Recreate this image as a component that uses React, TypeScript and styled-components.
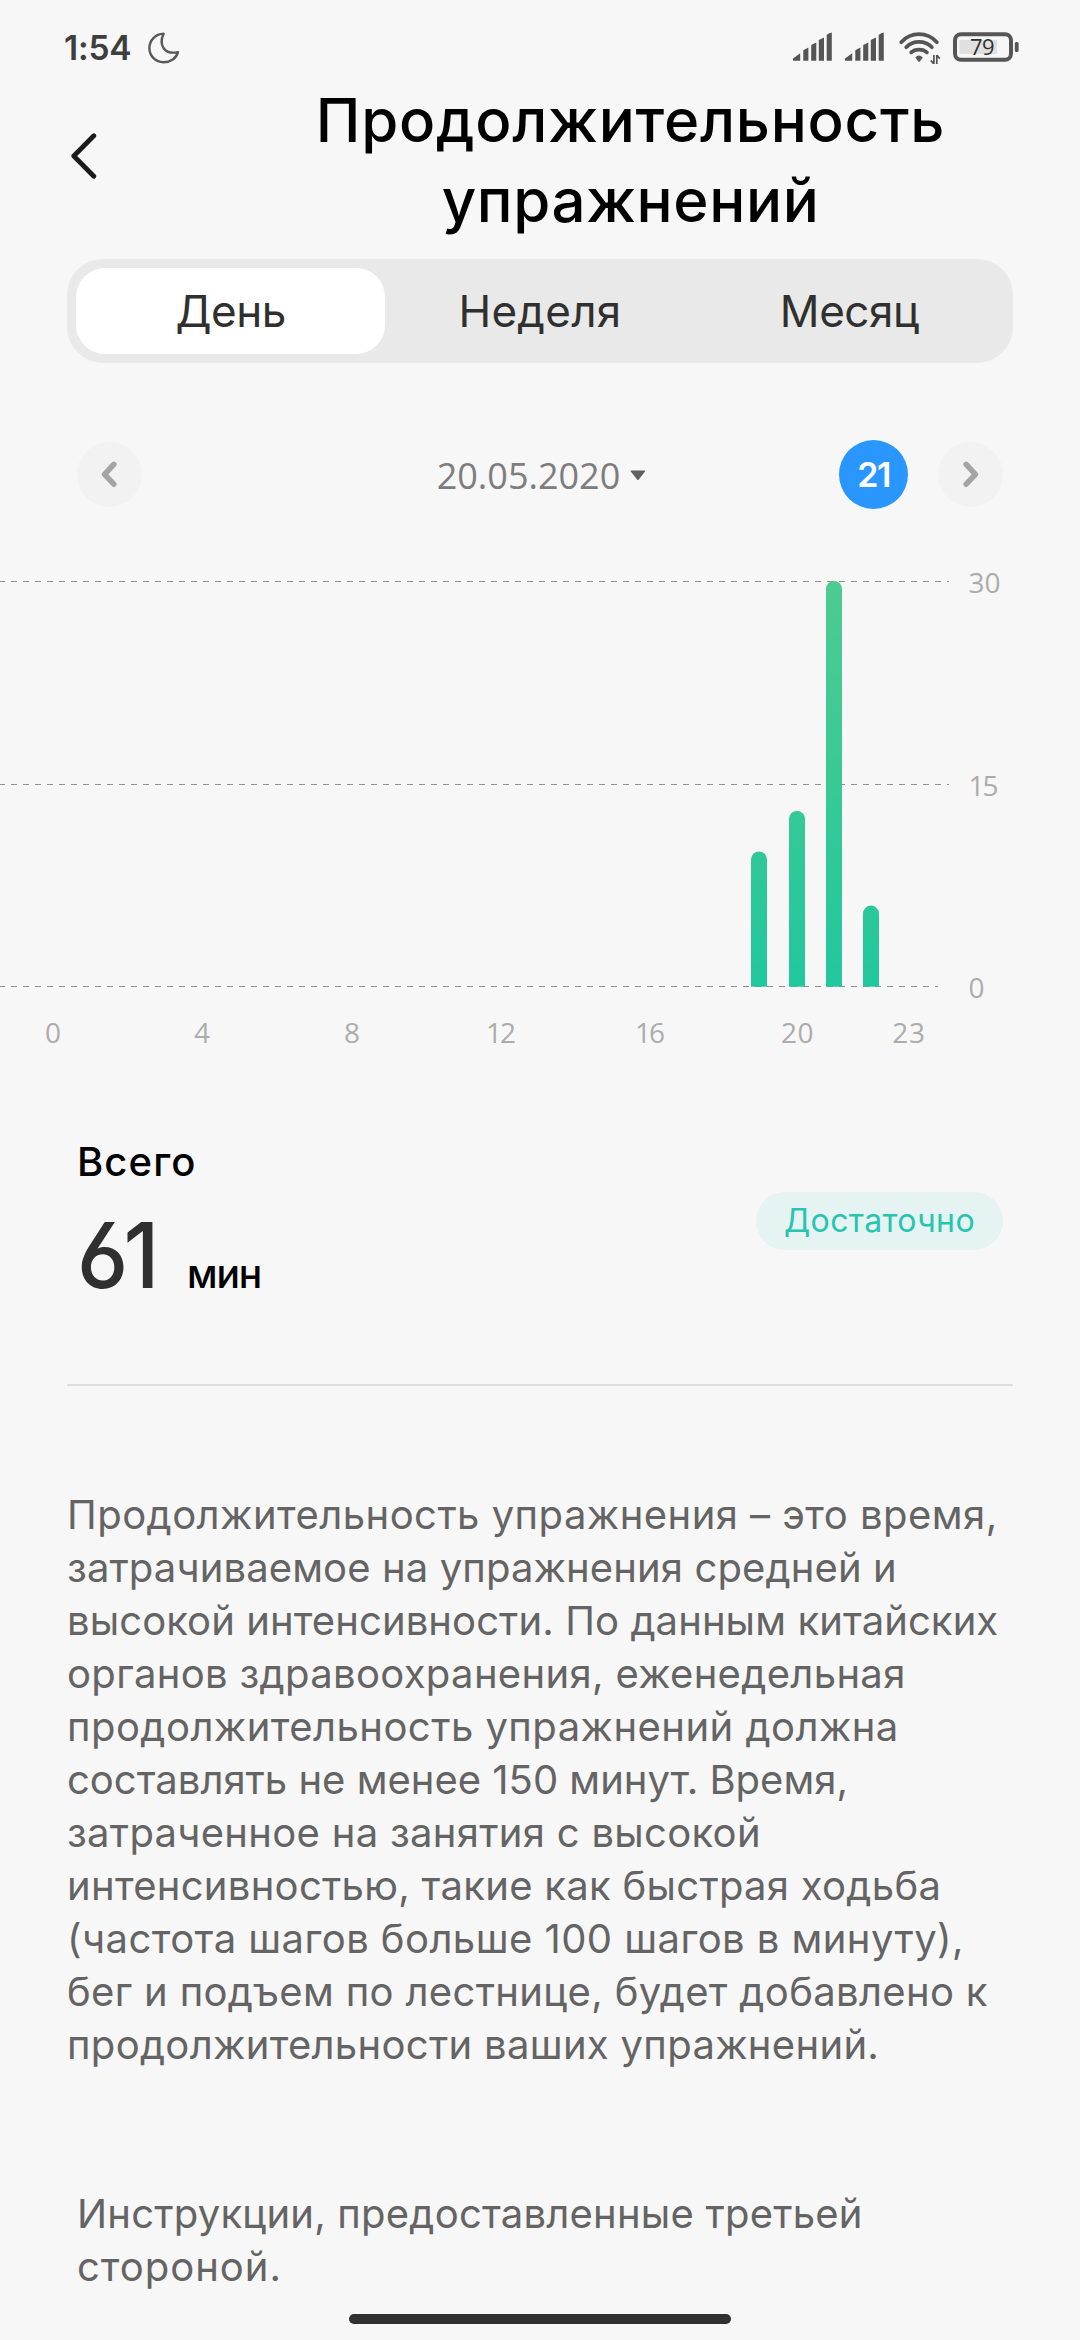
import React from 'react';
import styled, { createGlobalStyle } from 'styled-components';

const GlobalStyle = createGlobalStyle`
  * { box-sizing: border-box; }
  html, body { margin: 0; padding: 0; background: #f7f7f7; }
  body { font-family: Inter, "Liberation Sans", sans-serif; }
  button { font: inherit; border: 0; padding: 0; background: none; color: inherit; }
  svg { display: block; flex: none; }
`;

const Screen = styled.main`
  width: 1080px;
  height: 2340px;
  overflow: hidden;
  display: flex;
  flex-direction: column;
  background: #f7f7f7;
`;

const StatusBar = styled.div`
  height: 80px;
  padding: 16px 61px 0 64px;
  display: flex;
  align-items: center;
  justify-content: space-between;
`;

const StatusGroup = styled.div<{ $gap: number }>`
  display: flex;
  align-items: center;
  gap: ${(p) => p.$gap}px;
`;

const Clock = styled.span`
  font-size: 33.5px;
  line-height: 40px;
  font-weight: 600;
  letter-spacing: -0.2px;
  color: #3e3e3e;
`;

const Header = styled.header`
  height: 160px;
  padding-left: 71px;
  display: flex;
  align-items: center;
`;

const BackButton = styled.button`
  width: 26px;
  height: 46px;
  margin: 0 84px 9px 0;
`;

const Title = styled.h1`
  flex: 1;
  margin: 0;
  text-align: center;
  font-size: 60px;
  line-height: 80px;
  font-weight: 500;
  color: #000;
`;

const Tracked = styled.span<{ $track: number }>`
  display: block;
  white-space: nowrap;
  letter-spacing: ${(p) => p.$track}px;
`;

const Tabs = styled.nav`
  height: 104px;
  margin: 19px 67px 0;
  padding: 9px;
  display: grid;
  grid-template-columns: repeat(3, 1fr);
  border-radius: 36px;
  background: #e9e9e9;
`;

const Tab = styled.button<{ $active?: boolean; $track: number }>`
  border-radius: 29px;
  background: ${(p) => (p.$active ? '#fff' : 'transparent')};
  color: #303030;
  font-size: 44px;
  line-height: 86px;
  letter-spacing: ${(p) => p.$track}px;
`;

const DateNav = styled.div`
  height: 69px;
  margin: 77px 77px 0;
  display: grid;
  grid-template-columns: 1fr auto 1fr;
  align-items: center;
`;

const RoundButton = styled.button`
  width: 65px;
  height: 65px;
  border-radius: 50%;
  display: flex;
  align-items: center;
  justify-content: center;
  background: #f2f2f2;
`;

const DatePicker = styled.button`
  padding: 2px 0 0 3px;
  display: flex;
  align-items: center;
  gap: 10px;
  font-family: "Open Sans", sans-serif;
  font-size: 36px;
  line-height: 48px;
  color: #7d7d7d;
`;

const NavEnd = styled.div`
  display: flex;
  align-items: center;
  justify-content: flex-end;
  gap: 30px;
`;

const TodayBadge = styled.button`
  width: 69px;
  height: 69px;
  border-radius: 50%;
  background: #2a96ff;
  color: #fff;
  font-size: 34px;
  line-height: 69px;
  font-weight: 600;
  letter-spacing: -1.6px;
`;

const ChartBox = styled.section`
  height: 500px;
  margin-top: 51px;
`;

const AxisText = styled.text`
  font-family: "Open Sans", sans-serif;
  font-size: 28px;
  fill: #acacac;
`;

const Summary = styled.section`
  height: 172px;
  margin: 78px 77px 0;
  display: flex;
  align-items: center;
  justify-content: space-between;
`;

const SummaryLabel = styled.div`
  font-size: 40px;
  line-height: 48px;
  font-weight: 500;
  letter-spacing: 1.1px;
  color: #000;
`;

const SummaryValue = styled.div`
  height: 110px;
  margin-top: 14px;
  display: flex;
  align-items: baseline;
`;

const Minutes = styled.span`
  width: 110px;
  font-size: 91px;
  line-height: 110px;
  font-weight: 500;
  font-feature-settings: "cv03", "ss01";
  letter-spacing: -5px;
  transform: scaleX(0.95);
  transform-origin: left;
  color: #303030;
`;

const Unit = styled.span`
  font-size: 39px;
  font-weight: 500;
  letter-spacing: -1.2px;
  color: #000;
`;

const Badge = styled.span`
  height: 58px;
  margin-bottom: 6px;
  padding: 0 28px;
  border-radius: 29px;
  background: #e5f3f2;
  color: #27c5af;
  font-size: 32px;
  line-height: 58px;
  letter-spacing: 0.4px;
`;

const Divider = styled.hr`
  width: 946px;
  height: 2px;
  margin: 74px 67px 0;
  border: 0;
  background: #dedede;
`;

const Paragraph = styled.p<{ $top: number; $left: number }>`
  margin: ${(p) => p.$top}px 0 0 ${(p) => p.$left}px;
  font-size: 40px;
  line-height: 53px;
  color: #646464;
`;

const HomeIndicator = styled.div`
  width: 382px;
  height: 10px;
  margin: 21px auto 0;
  border-radius: 5px;
  background: #303030;
`;

const MoonIcon = () => (
  <svg width="32" height="32" viewBox="0 0 32 32" fill="none" stroke="#585858" strokeWidth="2.4" strokeLinejoin="round">
    <path d="M15.6 1.6C7.4 2 1.4 8.2 1.4 16.1C1.4 24.2 7.6 30.2 15.6 30.2C22.6 30.2 28.4 26.2 30 20.1C16 23 10.5 13 15.6 1.6Z" />
  </svg>
);

const SignalIcon = () => (
  <svg width="40" height="32" viewBox="0 0 40 32" fill="#555">
    <path d="M0 28.8V26.6L7.2 21.3V28.8Z M10.3 28.8V18.2L15.4 15.6V28.8Z M18.2 28.8V13L23.3 10.6V28.8Z M25.8 28.8V8L31 5.4V28.8Z M33.7 28.8V3Q36 .6 38.8 .4V28.8Z" />
  </svg>
);

const WifiIcon = () => (
  <svg width="43" height="32" viewBox="0 0 43 32" fill="none" stroke="#555" strokeWidth="3.7" strokeLinecap="round">
    <path d="M3.2 10.2C13 -.5 29 -.5 38.9 10.2" />
    <path d="M8.2 15.2C15 8 27 8 33.9 15.2" />
    <path d="M13.2 20.4C17 16.6 25 16.6 28.9 20.4" />
    <path d="M17.3 25.4Q21 21.6 24.8 25.4L21.8 29.4Q21 30.2 20.3 29.4Z" fill="#555" stroke="none" />
    <path d="M35.9 23V32M32.8 28.4L35.4 31.4M38.8 32V23M41.8 26.6L39.2 23.6" strokeWidth="1.7" strokeLinecap="butt" />
  </svg>
);

const BatteryText = styled.text`
  font-family: "Open Sans", sans-serif;
  font-size: 22px;
  font-weight: 500;
  letter-spacing: -0.6px;
  fill: #303030;
`;

const BatteryIcon = () => (
  <svg width="66" height="32" viewBox="0 0 66 32">
    <rect x="6.5" y="8" width="37.5" height="14" fill="#e0e0e0" />
    <rect x="2" y="2.2" width="56" height="25.6" rx="6" fill="none" stroke="#565656" strokeWidth="4" />
    <rect x="61.8" y="10" width="3.8" height="10" rx="1.5" fill="#565656" />
    <BatteryText x="29" y="23" textAnchor="middle">79</BatteryText>
  </svg>
);

const Chevron = ({ right }: { right?: boolean }) => (
  <svg width="17" height="27" viewBox="0 0 17 27" fill="none" stroke="#a4a4a4" strokeWidth="5.6" strokeLinecap="round" strokeLinejoin="round">
    <path d={right ? 'M4.2 3.4L13.4 13.3L4.2 23.2' : 'M12.8 3.4L3.6 13.3L12.8 23.2'} />
  </svg>
);

const BASELINE = 426.8;
const UNIT = 13.53;
const bars = [
  { x: 751, value: 10 },
  { x: 789, value: 13 },
  { x: 826, value: 30 },
  { x: 863, value: 6 },
];
const gridLines = [
  { y: 21.5, end: 949, label: '30', track: 0 },
  { y: 224.5, end: 949, label: '15', track: -2 },
  { y: 426.5, end: 938, label: '0', track: 0 },
];
const hours = [
  { x: 53, label: '0', track: 0 },
  { x: 202, label: '4', track: 0 },
  { x: 352, label: '8', track: 0 },
  { x: 500, label: '12', track: -2 },
  { x: 649, label: '16', track: -2 },
  { x: 797.5, label: '20', track: 0.6 },
  { x: 909, label: '23', track: 0.8 },
];

const Chart = () => (
  <ChartBox>
    <svg width="1080" height="500" viewBox="0 0 1080 500">
      <defs>
        <linearGradient id="bar" gradientUnits="userSpaceOnUse" x1="0" y1="20" x2="0" y2="427">
          <stop offset="0" stopColor="#4ecb90" />
          <stop offset="0.5" stopColor="#38c996" />
          <stop offset="1" stopColor="#22c79d" />
        </linearGradient>
      </defs>
      {gridLines.map((g) => (
        <g key={g.label}>
          <path d={`M-1 ${g.y}H${g.end}`} stroke="#8e8e8e" strokeWidth="1" strokeDasharray="6 6" />
          <AxisText x="968.5" y={g.y + 11.3} letterSpacing={g.track}>{g.label}</AxisText>
        </g>
      ))}
      {bars.map((b) => {
        const top = BASELINE - b.value * UNIT;
        return <path key={b.x} d={`M${b.x} ${BASELINE}V${top + 8}a8 8 0 0 1 16 0V${BASELINE}Z`} fill="url(#bar)" />;
      })}
      {hours.map((h) => (
        <AxisText key={h.label} x={h.x} y="482.5" textAnchor="middle" letterSpacing={h.track}>{h.label}</AxisText>
      ))}
    </svg>
  </ChartBox>
);

const description: [string, number][] = [
  ['Продолжительность упражнения – это время,', 0.46],
  ['затрачиваемое на упражнения средней и', 0.12],
  ['высокой интенсивности. По данным китайских', 0.09],
  ['органов здравоохранения, еженедельная', 0.33],
  ['продолжительность упражнений должна', 0.46],
  ['составлять не менее 150 минут. Время,', 0],
  ['затраченное на занятия с высокой', 0.3],
  ['интенсивностью, такие как быстрая ходьба', 0.29],
  ['(частота шагов больше 100 шагов в минуту),', 0.44],
  ['бег и подъем по лестнице, будет добавлено к', 0.34],
  ['продолжительности ваших упражнений.', 0.31],
];
const notice: [string, number][] = [
  ['Инструкции, предоставленные третьей', 0.22],
  ['стороной.', 0.99],
];

const Lines = ({ items }: { items: [string, number][] }) => (
  <>
    {items.map(([text, track]) => (
      <Tracked key={text} $track={track}>{text}</Tracked>
    ))}
  </>
);

export default function App() {
  return (
    <>
      <GlobalStyle />
      <Screen>
        <StatusBar>
          <StatusGroup $gap={17}>
            <Clock>1:54</Clock>
            <MoonIcon />
          </StatusGroup>
          <StatusGroup $gap={12.5}>
            <SignalIcon />
            <SignalIcon />
            <WifiIcon />
            <BatteryIcon />
          </StatusGroup>
        </StatusBar>
        <Header>
          <BackButton aria-label="Назад">
            <svg width="26" height="46" viewBox="0 0 26 46" fill="none" stroke="#1b1b1b" strokeWidth="4.8" strokeLinecap="round" strokeLinejoin="round">
              <path d="M22.8 2.8L2.8 23L22.8 43.2" />
            </svg>
          </BackButton>
          <Title>
            <Tracked $track={0.76}>Продолжительность</Tracked>
            <Tracked $track={0.64}>упражнений</Tracked>
          </Title>
        </Header>
        <Tabs>
          <Tab $active $track={-0.5}>День</Tab>
          <Tab $track={0.3}>Неделя</Tab>
          <Tab $track={-0.45}>Месяц</Tab>
        </Tabs>
        <DateNav>
          <RoundButton aria-label="Предыдущий день"><Chevron /></RoundButton>
          <DatePicker>
            20.05.2020
            <svg width="16" height="11" viewBox="0 0 16 11" fill="#606060">
              <path d="M.6 1.2Q.4 .4 1.4 .4H14.6Q15.6 .4 15 1.4L8.8 9.4Q8 10.6 7.1 9.4Z" />
            </svg>
          </DatePicker>
          <NavEnd>
            <TodayBadge>21</TodayBadge>
            <RoundButton aria-label="Следующий день"><Chevron right /></RoundButton>
          </NavEnd>
        </DateNav>
        <Chart />
        <Summary>
          <div>
            <SummaryLabel>Всего</SummaryLabel>
            <SummaryValue>
              <Minutes>61</Minutes>
              <Unit>мин</Unit>
            </SummaryValue>
          </div>
          <Badge>Достаточно</Badge>
        </Summary>
        <Divider />
        <Paragraph $top={102} $left={67}><Lines items={description} /></Paragraph>
        <Paragraph $top={116} $left={77}><Lines items={notice} /></Paragraph>
        <HomeIndicator />
      </Screen>
    </>
  );
}
